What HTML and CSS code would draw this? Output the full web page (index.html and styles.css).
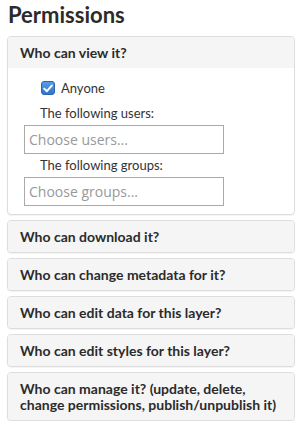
FILE: index.html
```html
<!DOCTYPE html>
<html>
<head>
<meta charset="utf-8">
<link rel="stylesheet" href="styles.css">
</head>
<body>
<h3 class="title">Permissions</h3>
<div class="panels">
  <div class="panel">
    <div class="panel-heading">Who can view it?</div>
    <div class="panel-body">
      <label class="check-row">
        <span class="checkbox"><svg width="10" height="9" viewBox="0 0 10 9"><path d="M1.2 4.6 L3.9 7.2 L8.8 1.6" fill="none" stroke="#fff" stroke-width="2" stroke-linecap="round" stroke-linejoin="round"/></svg></span>
        <span class="check-label">Anyone</span>
      </label>
      <div class="field-label first">The following users:</div>
      <div class="input"><span class="placeholder">Choose users...</span></div>
      <div class="field-label">The following groups:</div>
      <div class="input"><span class="placeholder">Choose groups...</span></div>
    </div>
  </div>
  <div class="panel"><div class="panel-heading">Who can download it?</div></div>
  <div class="panel"><div class="panel-heading">Who can change metadata for it?</div></div>
  <div class="panel"><div class="panel-heading">Who can edit data for this layer?</div></div>
  <div class="panel"><div class="panel-heading">Who can edit styles for this layer?</div></div>
  <div class="panel"><div class="panel-heading">Who can manage it? (update, delete, change permissions, publish/unpublish it)</div></div>
</div>
</body>
</html>
```
FILE: styles.css
```css
* { box-sizing: border-box; }
body {
  margin: 0;
  padding: 0 10px 0 7px;
  font-family: Lato, "Liberation Sans", sans-serif;
  color: #333;
  background: #fff;
}
.title {
  margin: 0;
  padding: 1px 0 0 1px;
  height: 36px;
  font-size: 22px;
  font-weight: 700;
  line-height: 28px;
  color: #2b2b2b;
}
.panels {
  display: flex;
  flex-direction: column;
  gap: 5px;
}
.panel {
  border: 1px solid #ddd;
  border-radius: 4px;
  background: #fff;
  box-shadow: 0 1px 1px rgba(0,0,0,0.05);
}
.panel-heading {
  background: #f5f5f5;
  padding: 8px 12px 7px;
  font-size: 14px;
  font-weight: 700;
  line-height: 16px;
  color: #2b2b2b;
  border-radius: 3px;
}
.panel:first-child .panel-heading {
  border-radius: 3px 3px 0 0;
}
.panel-body {
  padding: 12px 0 8px 16px;
}
.check-row {
  display: flex;
  align-items: center;
  gap: 6px;
  padding-left: 17px;
  height: 16px;
}
.checkbox {
  width: 14px;
  height: 14px;
  border-radius: 3px;
  border: 1px solid #2c64ad;
  background: linear-gradient(#5a9be6, #2f74cf);
  display: flex;
  align-items: center;
  justify-content: center;
}
.check-label {
  font-size: 13px;
  line-height: 16px;
  color: #333;
}
.field-label {
  font-size: 13px;
  line-height: 16px;
  padding-left: 16px;
  margin-top: 3px;
  height: 16px;
}
.field-label.first {
  margin-top: 9px;
}
.input {
  width: 200px;
  height: 29px;
  border: 1px solid #aaa;
  margin-top: 4px;
  padding: 0 4px;
  display: flex;
  align-items: center;
  background: #fff;
}
.placeholder {
  font-family: "Open Sans", sans-serif;
  font-size: 14px;
  color: #999;
}
```
